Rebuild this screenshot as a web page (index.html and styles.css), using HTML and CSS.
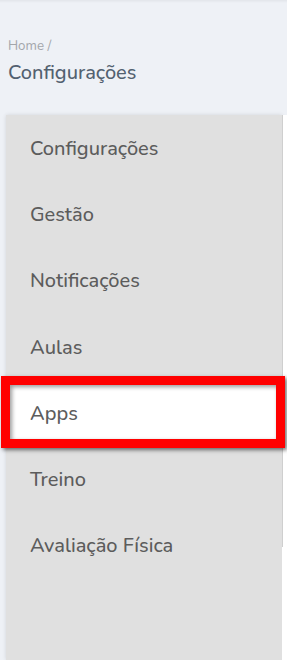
FILE: index.html
```html
<!DOCTYPE html>
<html lang="pt-BR">
<head>
  <meta charset="UTF-8">
  <title>Configurações</title>
  <link rel="stylesheet" href="styles.css">
</head>
<body>

<div class="topbar"></div>

<!-- Breadcrumb + page title -->
<div class="page-header">
  <div class="breadcrumb">Home /</div>
  <h1 class="page-title">Configurações</h1>
</div>

<div class="layout">
  <ul class="side-menu">
    <li class="menu-item">Configurações</li>
    <li class="menu-item">Gestão</li>
    <li class="menu-item">Notificações</li>
    <li class="menu-item">Aulas</li>
    <li class="menu-item active">Apps</li>
    <li class="menu-item">Treino</li>
    <li class="menu-item">Avaliação Física</li>
  </ul>
  <div class="content">
    <div class="content-edge"></div>
  </div>
</div>

</body>
</html>
```

FILE: styles.css
```css
body {
  margin: 0;
  background: #eef1f6;
  font-family: "Nunito", "Open Sans", sans-serif;
  height: 660px;
  overflow: hidden;
}
.topbar {
  height: 3px;
  background: linear-gradient(#e2e5ea, #eef1f6);
}
.page-header {
  padding: 34px 8px 0 8px;
  height: 78px;
}
.breadcrumb {
  font-size: 13.3px;
  color: #a3a6ab;
  line-height: 18px;
}
.page-title {
  margin: 6px 0 0 0;
  font-size: 20px;
  font-weight: 500;
  color: #536170;
  line-height: 24px;
}
.layout {
  display: flex;
  margin-left: 6px;
  height: 545px;
}
.side-menu {
  list-style: none;
  margin: 0;
  padding: 1px 0 0 0;
  width: 276px;
  background: #e0e0e0;
  box-shadow: 0 0 4px rgba(0, 0, 0, 0.12);
}
.menu-item {
  position: relative;
  height: 66.2px;
  line-height: 66px;
  padding-left: 24px;
  font-size: 20px;
  font-weight: 500;
  color: #5c5c5c;
}
.menu-item.active {
  background: #fff;
}
.menu-item.active::after {
  content: "";
  position: absolute;
  left: -5px;
  right: -3px;
  top: -5px;
  bottom: -1px;
  border: 9px solid #ff0000;
  box-shadow: 2px 2px 4px rgba(0, 0, 0, 0.55), inset 2px 2px 4px rgba(0, 0, 0, 0.4);
}
.content {
  flex: 1;
  background: #fff;
}
.content-edge {
  width: 1px;
  height: 432px;
  background: #cfcfcf;
}
```
